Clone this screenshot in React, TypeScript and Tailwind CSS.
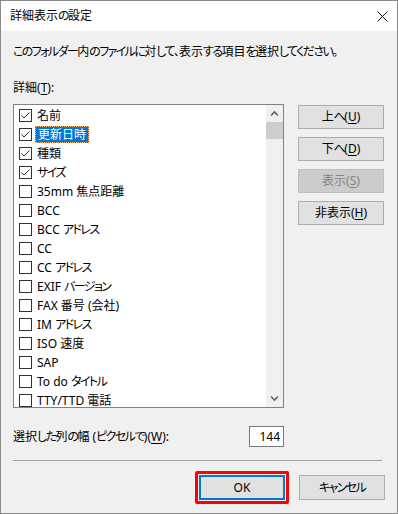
import React from "react";

const items: [string, boolean][] = [
  ["名前", true],
  ["更新日時", true],
  ["種類", true],
  ["サイズ", true],
  ["35mm 焦点距離", false],
  ["BCC", false],
  ["BCC アドレス", false],
  ["CC", false],
  ["CC アドレス", false],
  ["EXIF バージョン", false],
  ["FAX 番号 (会社)", false],
  ["IM アドレス", false],
  ["ISO 速度", false],
  ["SAP", false],
  ["To do タイトル", false],
  ["TTY/TTD 電話", false],
];

function J({ t }: { t: string }) {
  const parts = t.split(/([\u3040-\u30ff]+|[\u3000-\u303f]+)/).filter(Boolean);
  return (
    <>
      {parts.map((p, i) => {
        if (/^[\u3040-\u30ff]+$/.test(p))
          return (
            <span key={i} className="tracking-[-1.6px]">
              {p}
            </span>
          );
        if (/^[\u3000-\u303f]+$/.test(p))
          return (
            <span key={i} className="tracking-[-1px]">
              {p}
            </span>
          );
        return <span key={i}>{p}</span>;
      })}
    </>
  );
}

function CheckBox({ checked }: { checked: boolean }) {
  return (
    <div className="w-[13px] h-[13px] shrink-0 border border-[#333333] bg-white flex items-center justify-center">
      {checked && (
        <svg width="11" height="11" viewBox="0 0 11 11">
          <polyline points="1.5,5.5 4,8 9.5,2.5" fill="none" stroke="#333333" strokeWidth="1" />
        </svg>
      )}
    </div>
  );
}

function SideButton({ label, key2, disabled }: { label: string; key2: string; disabled?: boolean }) {
  return (
    <div
      className={
        disabled
          ? "w-[86px] h-[24px] border border-[#bfbfbf] bg-[#cccccc] text-[#838383] flex items-center justify-center leading-[16px]"
          : "w-[86px] h-[24px] border border-[#adadad] bg-[#e1e1e1] flex items-center justify-center leading-[16px]"
      }
    >
      <span>
        <J t={label} />(<span className="underline underline-offset-2">{key2}</span>)
      </span>
    </div>
  );
}

export default function App() {
  return (
    <div className="w-[398px] h-[514px] border border-[#8a8a8a] bg-[#f0f0f0] flex flex-col text-[12px] text-black font-['Noto_Sans','Noto_Sans_CJK_JP',sans-serif] [font-feature-settings:'palt']">
      <div className="h-[30px] bg-white flex items-center justify-between pl-[9px] pr-[9px] shrink-0">
        <span className="leading-[16px]">
          <J t="詳細表示の設定" />
        </span>
        <svg width="11" height="11" viewBox="0 0 11 11">
          <line x1="0.5" y1="0.5" x2="10.5" y2="10.5" stroke="#111" strokeWidth="1" />
          <line x1="10.5" y1="0.5" x2="0.5" y2="10.5" stroke="#111" strokeWidth="1" />
        </svg>
      </div>
      <div className="flex-1 flex flex-col pl-[12px] pr-[12px]">
        <p className="mt-[13px] leading-[16px]">
          <J t="このフォルダー内のファイルに対して、表示する項目を選択してください。" />
        </p>
        <p className="mt-[20px] leading-[16px]">
          <J t="詳細" />(<span className="underline underline-offset-2">T</span>):
        </p>
        <div className="mt-[8px] flex gap-[14px]">
          <div className="w-[271px] h-[304px] border border-[#828282] bg-white flex overflow-hidden">
            <div className="flex-1 flex flex-col pt-[1px] overflow-hidden">
              {items.map(([name, checked], i) => (
                <div key={name} className="h-[19px] shrink-0 flex items-center pl-[5px]">
                  <CheckBox checked={checked} />
                  <span
                    className={
                      i === 1
                        ? "ml-[3px] h-[17px] px-[2px] flex items-center leading-[15px] bg-[#0078d7] text-white border border-dotted border-[#f4b870]"
                        : "ml-[3px] h-[17px] px-[2px] flex items-center leading-[15px] whitespace-pre"
                    }
                  >
                    <J t={name} />
                  </span>
                </div>
              ))}
            </div>
            <div className="w-[17px] shrink-0 bg-[#f0f0f0] flex flex-col">
              <div className="h-[17px] flex items-center justify-center">
                <svg width="17" height="17" viewBox="0 0 17 17">
                  <polyline points="5,10.5 8.5,7 12,10.5" fill="none" stroke="#606060" strokeWidth="1.6" />
                </svg>
              </div>
              <div className="h-[17px] bg-[#cdcdcd]" />
              <div className="flex-1" />
              <div className="h-[17px] flex items-center justify-center">
                <svg width="17" height="17" viewBox="0 0 17 17">
                  <polyline points="5,6.5 8.5,10 12,6.5" fill="none" stroke="#606060" strokeWidth="1.6" />
                </svg>
              </div>
            </div>
          </div>
          <div className="flex flex-col gap-[8px] mt-[1px]">
            <SideButton label="上へ" key2="U" />
            <SideButton label="下へ" key2="D" />
            <SideButton label="表示" key2="S" disabled />
            <SideButton label="非表示" key2="H" />
          </div>
        </div>
        <div className="mt-[18px] w-[271px] flex items-center justify-between">
          <span className="leading-[16px] whitespace-pre">
            <J t="選択した列の幅 (ピクセルで)" />(<span className="underline underline-offset-2">W</span>):
          </span>
          <div className="w-[35px] h-[21px] border border-[#7a7a7a] bg-white flex items-center justify-end pr-[3px] leading-[16px]">
            144
          </div>
        </div>
        <div className="mt-[13px] h-[1px] w-[369px] bg-[#a0a0a0]" />
        <div className="mt-[10px] flex items-center justify-end gap-[10px]">
          <div className="border-[3px] border-[#ff0000] rounded-[2px] p-[1px] bg-[#f0f0f0]">
            <div className="w-[86px] h-[25px] border-2 border-[#0078d7] bg-[#e1e1e1] flex items-center justify-center leading-[16px]">
              OK
            </div>
          </div>
          <div className="w-[86px] h-[25px] border border-[#adadad] bg-[#e1e1e1] flex items-center justify-center leading-[16px]">
            <J t="キャンセル" />
          </div>
        </div>
      </div>
    </div>
  );
}
